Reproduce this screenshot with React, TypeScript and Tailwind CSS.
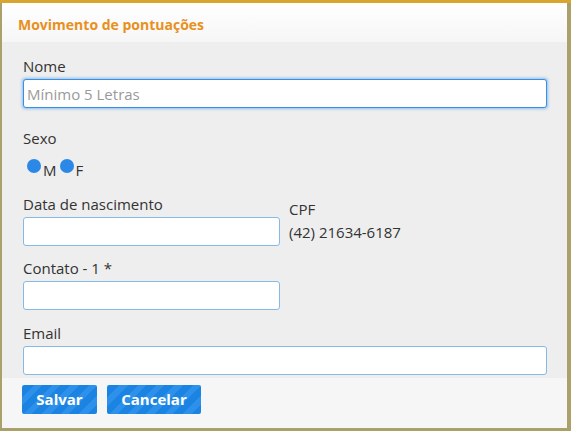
import { useState } from "react";

const Field: React.FC<{ label: string; wide?: boolean; placeholder?: string; focused?: boolean }> = ({
  label,
  wide,
  placeholder,
  focused,
}) => (
  <div className="flex flex-col">
    <label className="text-[15px] leading-[20px] text-[#333] mb-[3px]">{label}</label>
    <input
      placeholder={placeholder}
      className={`h-[29px] ${wide ? "w-[524px]" : "w-[257px]"} rounded-[3px] bg-white px-[3px] text-[15px] text-[#333] placeholder:text-[#9a9a9a] outline-none border ${
        focused
          ? "border-[#3a8fe0] shadow-[0_0_3px_1px_rgba(60,150,240,0.55)]"
          : "border-[#86b8e8]"
      }`}
    />
  </div>
);

const App: React.FC = () => {
  const [sexo, setSexo] = useState<string>("");

  return (
    <div
      className="w-[571px] h-[431px] bg-[#a9a06a] pt-[3px] pl-[2px] font-['Open_Sans',sans-serif]"
      style={{ boxShadow: "inset 0 3px 0 #d9a52e" }}
    >
      <div className="w-[565px] h-[425px] flex flex-col bg-[#eeeeee] overflow-hidden">
        <div className="h-[39px] flex items-center pt-[4px] px-[16px] bg-gradient-to-b from-white to-[#f6f6f6]">
          <span className="text-[#e8901c] font-bold text-[14px]">Movimento de pontuações</span>
        </div>

        <div className="flex-1 flex flex-col px-[21px] pt-[14px]">
          <Field label="Nome" wide placeholder="Mínimo 5 Letras" focused />

          <div className="mt-[20px] text-[15px] leading-[20px] text-[#333]">Sexo</div>
          <div className="flex items-center mt-[9px] ml-[4px] text-[15px] text-[#333] leading-[20px]">
            {["M", "F"].map((s) => (
              <button
                key={s}
                onClick={() => setSexo(s)}
                className="flex items-end mr-[3px]"
              >
                <span
                  className={`w-[14px] h-[14px] rounded-full mb-[4px] ${
                    sexo === s ? "bg-[#0b6fd0]" : "bg-[#2b88e6]"
                  }`}
                />
                <span className="ml-[2px] translate-y-[3px]">{s}</span>
              </button>
            ))}
          </div>

          <div className="flex mt-[17px] gap-[9px]">
            <Field label="Data de nascimento" />
            <div className="flex flex-col text-[15px] text-[#333] leading-[23px] pt-[4px]">
              <span>CPF</span>
              <span>(42) 21634-6187</span>
            </div>
          </div>

          <div className="mt-[12px]">
            <Field label="Contato - 1 *" />
          </div>

          <div className="mt-[13px]">
            <Field label="Email" wide />
          </div>
        </div>

        <div className="h-[50px] bg-[#f6f6f6] flex items-start gap-[10px] px-[20px] pt-[7px]">
          <button className="h-[29px] w-[75px] rounded-[2px] text-white font-bold text-[15px] bg-[image:repeating-linear-gradient(-45deg,#1b84e3_0,#1b84e3_7px,#2d91eb_7px,#2d91eb_13px)]">
            Salvar
          </button>
          <button className="h-[29px] w-[94px] rounded-[2px] text-white font-bold text-[15px] bg-[image:repeating-linear-gradient(-45deg,#1b84e3_0,#1b84e3_7px,#2d91eb_7px,#2d91eb_13px)]">
            Cancelar
          </button>
        </div>
      </div>
    </div>
  );
};

export default App;
